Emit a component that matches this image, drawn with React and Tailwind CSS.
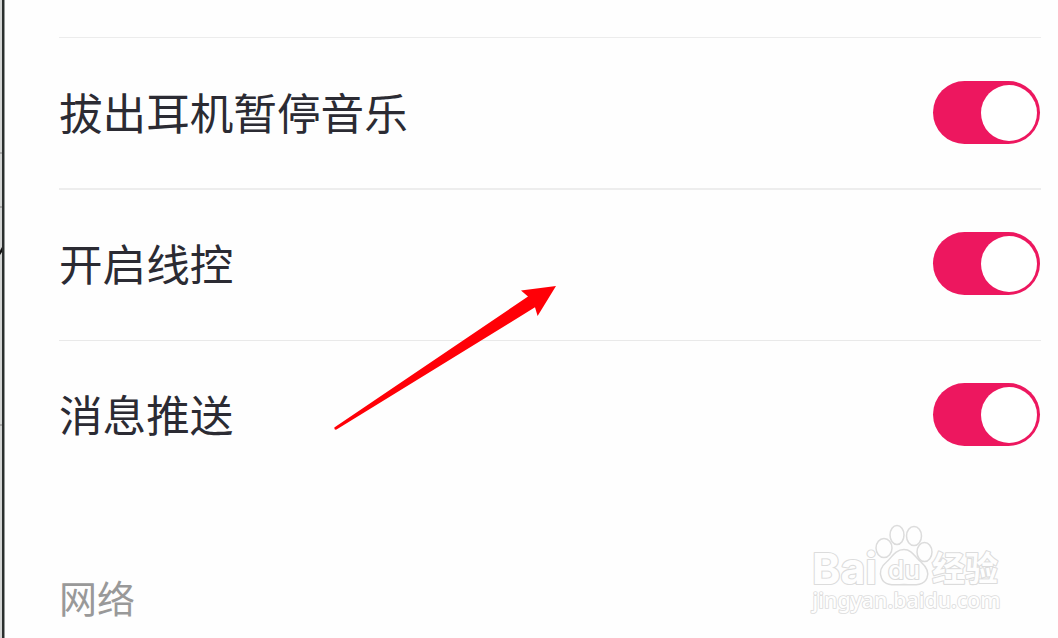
const rows = [
  { label: "拔出耳机暂停音乐", border: "h-[152px] border-b-2 border-[#ededed] pb-px" },
  { label: "开启线控", border: "h-[151px] border-b border-[#e9e9e9] pb-[3px]" },
  { label: "消息推送", border: "h-[150px] pb-[3px]" },
];

function Toggle() {
  return (
    <button
      role="switch"
      aria-checked="true"
      className="mr-px flex h-[63px] w-[107px] shrink-0 items-center justify-end rounded-full bg-[#ed175f] pr-[3px]"
    >
      <span className="size-[56px] rounded-full bg-white" />
    </button>
  );
}

function LeftEdge() {
  return (
    <svg className="h-[638px] w-[5px] shrink-0" viewBox="0 0 5 638">
      <rect width="2" height="638" fill="#d3d5d4" />
      <rect x="2" width="2" height="638" fill="#2b2f2e" />
      <rect x="4" width="1" height="638" fill="#969a99" />
      <path d="M0 153h2M0 207h2M0 425h2" stroke="#aaa" strokeWidth="2" />
      <path d="M0 250.5L2 247V252L0 255Z" fill="#111" />
    </svg>
  );
}

function Arrow() {
  return (
    <svg className="absolute left-[320px] top-[270px] h-[170px] w-[250px]" viewBox="0 0 250 170">
      <path
        d="M14.3 157.4L208 26.5L201 20.5L236 16L217.6 46L215 37.3L16.5 159.5Q14.2 160.2 14.3 157.4Z"
        fill="#ff0007"
      />
    </svg>
  );
}

function Watermark() {
  return (
    <svg
      className="absolute left-[800px] top-[515px] h-[110px] w-[220px]"
      viewBox="0 0 220 110"
      fill="#fefefe"
      stroke="#dcdcdc"
      strokeWidth="1.5"
      strokeLinejoin="round"
    >
      <ellipse cx="97" cy="20" rx="7" ry="9.5" />
      <ellipse cx="114" cy="21" rx="7.5" ry="9.5" />
      <ellipse cx="84" cy="33" rx="8" ry="9.5" />
      <ellipse cx="124.5" cy="37" rx="7.5" ry="9.5" />
      <path d="M104 34.5C95 34.5 91.5 43 86.5 47C81 51.5 79 57 81.5 63C84 70 91 70.5 104 69.5C117 70.5 124 70 127 63C129.5 57 126 51.5 121 47C115 42 112 34.5 104 34.5Z" />
      <g strokeWidth="2.2" paintOrder="stroke">
        <text x="12" y="69" fontFamily="Inter, sans-serif" fontSize="43" fontWeight="700" textLength="65" lengthAdjust="spacingAndGlyphs">Bai</text>
        <text x="88" y="63.5" fontFamily="Inter, sans-serif" fontSize="25" fontWeight="500" textLength="32" lengthAdjust="spacingAndGlyphs">du</text>
        <text x="132" y="66" fontFamily="'Noto Sans CJK SC', sans-serif" fontSize="34" fontWeight="700" textLength="66" lengthAdjust="spacingAndGlyphs">经验</text>
        <text x="12.5" y="93" strokeWidth="1.7" fontFamily="'Noto Sans', sans-serif" fontSize="21" fontWeight="500" textLength="188" lengthAdjust="spacingAndGlyphs">jingyan.baidu.com</text>
      </g>
    </svg>
  );
}

export default function App() {
  return (
    <div className="relative flex h-[638px] w-[1058px] overflow-hidden bg-[#fefefe] font-['Noto_Sans_CJK_SC',sans-serif]">
      <LeftEdge />
      <main className="ml-[54px] w-[982px]">
        <div className="h-[38px] border-b border-[#ececec]" />
        {rows.map((row) => (
          <div key={row.label} className={`flex items-center justify-between ${row.border}`}>
            <span className="pb-px text-[43.6px] leading-none text-[#2b2b33]">{row.label}</span>
            <Toggle />
          </div>
        ))}
        <h2 className="mt-[87px] text-[38px] font-normal leading-none text-[#999]">网络</h2>
      </main>
      <Arrow />
      <Watermark />
    </div>
  );
}
